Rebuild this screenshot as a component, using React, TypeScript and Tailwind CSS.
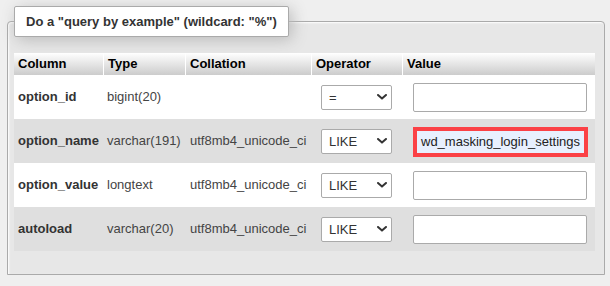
import React from "react";

type Row = {
  name: string;
  type: string;
  collation: string;
  op: string;
  value: string;
  even: boolean;
  highlight?: boolean;
};

const rows: Row[] = [
  { name: "option_id", type: "bigint(20)", collation: "", op: "=", value: "", even: false },
  { name: "option_name", type: "varchar(191)", collation: "utf8mb4_unicode_ci", op: "LIKE", value: "wd_masking_login_settings", even: true, highlight: true },
  { name: "option_value", type: "longtext", collation: "utf8mb4_unicode_ci", op: "LIKE", value: "", even: false },
  { name: "autoload", type: "varchar(20)", collation: "utf8mb4_unicode_ci", op: "LIKE", value: "", even: true },
];

function Chevron() {
  return (
    <svg width="10" height="6" viewBox="0 0 10 6" className="block">
      <path d="M1 1 L5 4.6 L9 1" fill="none" stroke="#333" strokeWidth="2" strokeLinecap="round" strokeLinejoin="round" />
    </svg>
  );
}

function FakeSelect({ value }: { value: string }) {
  return (
    <div className="flex items-center justify-between w-[71px] h-[25px] bg-white border border-[#aaa] rounded-[2px] pl-[7px] pr-[4px] text-[13px] text-[#333]">
      <span className="leading-none">{value}</span>
      <Chevron />
    </div>
  );
}

export default function App() {
  return (
    <div className="w-[610px] h-[286px] bg-[#efefef] pt-[6px] pl-[7px] pr-[5px] font-['Liberation_Sans',Arial,sans-serif]">
      <fieldset className="h-[269px] bg-[#e7e7e7] border border-[#aaa] rounded-t-[4px] pl-[6px] pr-[8px] pt-[16px] pb-[23px] shadow-[inset_1px_1px_2px_#fff]">
        <legend className="bg-white border border-[#aaa] rounded-[2px] px-[11px] py-[7px] shadow-[3px_3px_15px_#bbb] text-[13px] leading-[15px] font-bold text-[#333]">
          Do a "query by example" (wildcard: "%")
        </legend>
        <div className="w-[581px] text-[13px]">
          <div className="grid grid-cols-[90px_82px_126px_91px_192px] h-[22px] font-bold text-black">
            <div className="flex items-center pl-[4px] border-r border-white bg-gradient-to-b from-white to-[#ccc]">Column</div>
            <div className="flex items-center pl-[4px] border-r border-white bg-gradient-to-b from-white to-[#ccc]">Type</div>
            <div className="flex items-center pl-[4px] border-r border-white bg-gradient-to-b from-white to-[#ccc]">Collation</div>
            <div className="flex items-center pl-[4px] border-r border-white bg-gradient-to-b from-white to-[#ccc]">Operator</div>
            <div className="flex items-center pl-[4px] bg-gradient-to-b from-white to-[#ccc]">Value</div>
          </div>
          {rows.map((r) => (
            <div
              key={r.name}
              className={
                "grid grid-cols-[90px_82px_126px_91px_192px] h-[44px] items-center " +
                (r.even ? "bg-[#dfdfdf]" : "bg-white")
              }
            >
              <div className="pl-[4px] font-bold text-[#333] whitespace-nowrap">{r.name}</div>
              <div className="pl-[3px] text-[#444] whitespace-nowrap">{r.type}</div>
              <div className="pl-[4px] text-[#444] whitespace-nowrap">{r.collation}</div>
              <div className="pl-[9px]">
                <FakeSelect value={r.op} />
              </div>
              <div className="pl-[10px]">
                {r.highlight ? (
                  <div className="w-[175px] h-[30px] mt-[2px] border-4 border-[#fb4146] bg-[#e8f0fe] flex items-center pl-[4px] text-[13px] text-[#222] whitespace-nowrap overflow-hidden">
                    {r.value}
                  </div>
                ) : (
                  <div className="w-[174px] h-[29px] bg-white border border-[#aaa] rounded-[2px]" />
                )}
              </div>
            </div>
          ))}
        </div>
      </fieldset>
    </div>
  );
}
